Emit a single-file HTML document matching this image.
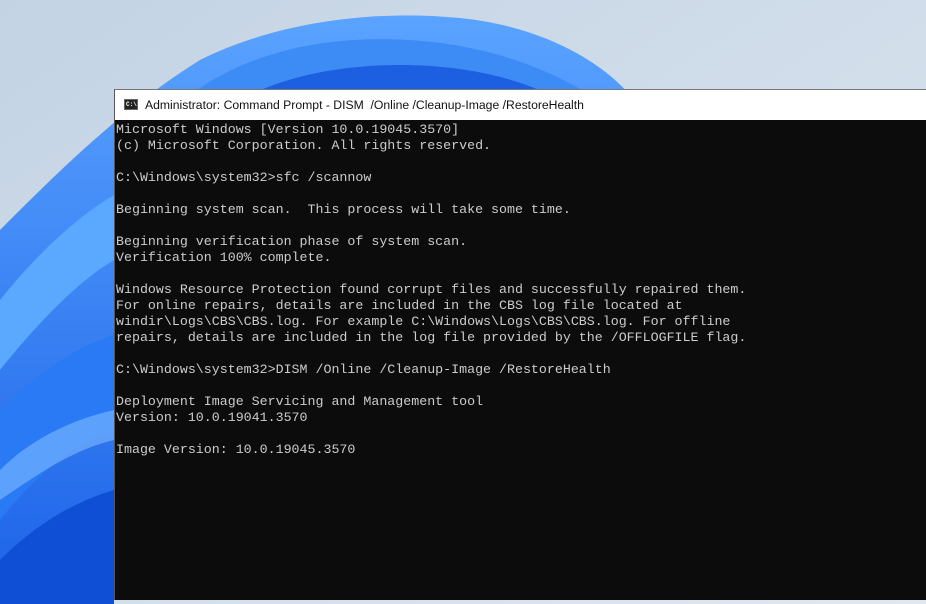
<!DOCTYPE html>
<html><head><meta charset="utf-8"><style>
html,body{margin:0;padding:0;width:926px;height:604px;overflow:hidden;background:#cfdbe8;}
#bg{position:absolute;left:0;top:0;}
#win{position:absolute;left:114px;top:89px;width:812px;height:510px;background:#0c0c0c;border-left:1px solid #555;border-top:1px solid #777;}
#title{height:30px;background:#fff;position:relative;font-family:"Liberation Sans",sans-serif;font-size:12.2px;color:#111;}
#title .t{position:absolute;left:30px;top:8px;}
#icon{position:absolute;left:9px;top:9px;width:14px;height:11px;background:#222;border:1px solid #666;box-sizing:border-box;}
#icon span{position:absolute;left:1px;top:0;font:bold 6px "Liberation Mono",monospace;color:#fff;line-height:9px;}
#con{position:absolute;left:1px;top:32px;margin:0;font-family:"Liberation Mono",monospace;font-size:13.3px;line-height:16px;color:#cccccc;white-space:pre;}
</style></head><body>
<svg id="bg" width="926" height="604" viewBox="0 0 926 604">
<defs>
<linearGradient id="sky" x1="0" y1="0" x2="1" y2="1"><stop offset="0" stop-color="#c3d3e4"/><stop offset="1" stop-color="#dfe7f0"/></linearGradient>
<linearGradient id="b2" x1="0" y1="0" x2="0" y2="1"><stop offset="0" stop-color="#5aa3ff"/><stop offset="1" stop-color="#1c62e8"/></linearGradient>
</defs>
<rect width="926" height="604" fill="url(#sky)"/>
<path d="M0 230 C60 170 120 110 200 60 C280 20 380 10 460 18 C540 26 600 60 630 95 L114 95 L114 604 L0 604 Z" fill="url(#b2)"/>
<path d="M190 95 C250 50 330 35 410 40 C490 45 550 70 590 95 Z" fill="#3d8cf5"/>
<path d="M250 95 C300 70 370 62 430 66 C490 70 530 85 550 95 Z" fill="#1c5fe0"/>
<path d="M0 300 C40 250 80 215 114 195 L114 260 C80 280 40 320 0 370 Z" fill="#5aa8ff"/>
<path d="M0 410 C40 370 80 345 114 335 L114 430 C80 440 40 470 0 520 Z" fill="#2a7af5"/>
<path d="M0 560 C40 520 80 500 114 490 L114 604 L0 604 Z" fill="#0f4fd6"/>
<path d="M0 470 C30 440 70 420 114 410 L114 440 C70 450 30 480 0 500 Z" fill="#7fbaff" opacity="0.6"/>
</svg>
<div id="win">
<div id="title"><div id="icon"><span>C:\</span></div><div class="t">Administrator: Command Prompt - DISM&nbsp; /Online /Cleanup-Image /RestoreHealth</div></div>
<pre id="con">Microsoft Windows [Version 10.0.19045.3570]
(c) Microsoft Corporation. All rights reserved.

C:\Windows\system32&gt;sfc /scannow

Beginning system scan.  This process will take some time.

Beginning verification phase of system scan.
Verification 100% complete.

Windows Resource Protection found corrupt files and successfully repaired them.
For online repairs, details are included in the CBS log file located at
windir\Logs\CBS\CBS.log. For example C:\Windows\Logs\CBS\CBS.log. For offline
repairs, details are included in the log file provided by the /OFFLOGFILE flag.

C:\Windows\system32&gt;DISM /Online /Cleanup-Image /RestoreHealth

Deployment Image Servicing and Management tool
Version: 10.0.19041.3570

Image Version: 10.0.19045.3570</pre>
</div>
</body></html>
